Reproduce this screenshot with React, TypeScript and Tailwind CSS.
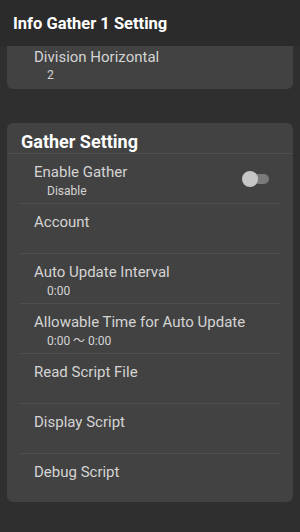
import React from "react";

type Row = { title: string; sub?: string; toggle?: boolean };

const rows: Row[] = [
  { title: "Enable Gather", sub: "Disable", toggle: true },
  { title: "Account" },
  { title: "Auto Update Interval", sub: "0:00" },
  { title: "Allowable Time for Auto Update", sub: "0:00 〜 0:00" },
  { title: "Read Script File" },
  { title: "Display Script" },
  { title: "Debug Script" },
];

const Toggle: React.FC = () => (
  <div className="relative w-[28px] h-[16px] mr-[10px]">
    <div className="absolute left-[7px] top-[3px] w-[20px] h-[10px] rounded-full bg-[#7a7a7a]" />
    <div className="absolute left-0 top-0 w-[16px] h-[16px] rounded-full bg-[#c6c6c6]" />
  </div>
);

const App: React.FC = () => {
  return (
    <div
      className="w-[300px] h-[532px] bg-[#2f2f2f] overflow-hidden flex flex-col"
      style={{ fontFamily: "Roboto, 'Noto Sans CJK JP', sans-serif" }}
    >
      {/* Header */}
      <div className="h-[46px] shrink-0 bg-[#2b2b2b] flex items-center px-[13px]">
        <span className="text-white text-[16.5px] font-bold leading-none pt-[3px]">
          Info Gather 1 Setting
        </span>
      </div>

      {/* Card partially scrolled */}
      <div className="mx-[7px] bg-[#424242] rounded-b-[6px] h-[43px] pl-[27px] flex flex-col">
        <span className="text-[#d4d4d4] text-[15px] leading-[18px] pt-[2px]">
          Division Horizontal
        </span>
        <span className="text-[#d4d4d4] text-[12px] leading-[14px] pl-[13px] pt-[2px]">
          2
        </span>
      </div>

      {/* Gather Setting card */}
      <div className="mx-[7px] mt-[34px] bg-[#424242] rounded-[6px]">
        <div className="h-[31px] flex items-end px-[14px] border-b border-[#4e4e4e]">
          <span className="text-white text-[18px] font-bold leading-[22px]">
            Gather Setting
          </span>
        </div>
        <div className="px-[13px]">
          {rows.map((r, i) => (
            <div
              key={r.title}
              className={`flex items-start justify-between pl-[14px] ${
                i < rows.length - 1 ? "h-[50px] border-b border-[#4e4e4e]" : "h-[48px]"
              }`}
            >
              <div className="flex flex-col pt-[9px]">
                <span className="text-[#d4d4d4] text-[15px] leading-[18px]">
                  {r.title}
                </span>
                {r.sub && (
                  <span className="text-[#d4d4d4] text-[12px] leading-[14px] pl-[13px] pt-[3px]">
                    {r.sub}
                  </span>
                )}
              </div>
              {r.toggle && (
                <div className="pt-[17px]">
                  <Toggle />
                </div>
              )}
            </div>
          ))}
        </div>
      </div>
    </div>
  );
};

export default App;
